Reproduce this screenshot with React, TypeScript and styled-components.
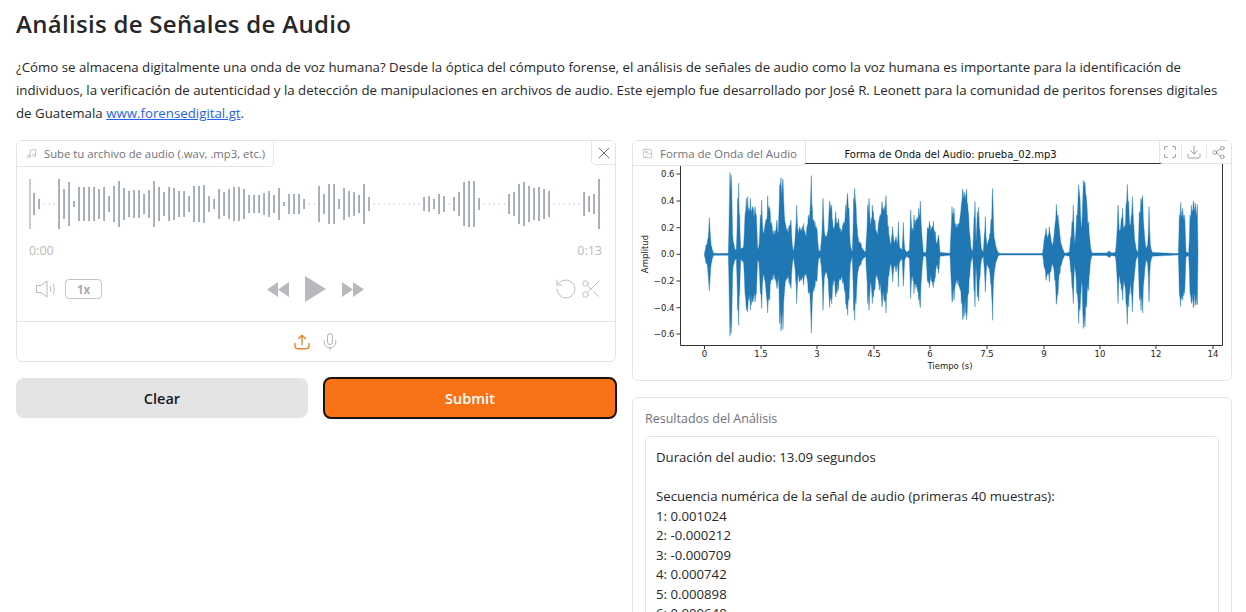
import React from 'react';
import styled, { createGlobalStyle } from 'styled-components';
import { Download, Image as ImageIcon, Mic, Music, RotateCcw, Scissors, Share2, X } from 'lucide-react';

const GlobalStyle = createGlobalStyle`
  html, body {
    margin: 0;
    height: 612px;
    overflow: hidden;
    background: #fff;
  }
  * { box-sizing: border-box; }
`;

const Page = styled.div`
  padding: 0 14px 0 16px;
  font-family: "Open Sans", "Liberation Sans", sans-serif;
  color: #27272a;
`;

const Title = styled.h1`
  margin: 0;
  padding-top: 8px;
  height: 56px;
  font-size: 24px;
  line-height: 32px;
  font-weight: 600;
  letter-spacing: 0.3px;
  color: #27272a;
`;

const Intro = styled.p`
  margin: 0 0 16px;
  height: 68px;
  font-size: 13.28px;
  line-height: 23px;
  color: #27272a;

  a { color: #2563eb; text-decoration: underline; }
`;

const Columns = styled.div`
  display: grid;
  grid-template-columns: 600px 600px;
  gap: 16px;
  align-items: start;
`;

const Column = styled.div`
  display: flex;
  flex-direction: column;
  gap: 16px;
`;

const Panel = styled.section<{ $height?: number }>`
  position: relative;
  border: 1px solid #e4e4e7;
  border-radius: 6px;
  background: #fff;
  height: ${({ $height }) => ($height ? `${$height}px` : 'auto')};
  overflow: hidden;
`;

const BlockLabel = styled.div<{ $height: number; $size: number }>`
  position: absolute;
  top: 0;
  left: 0;
  height: ${({ $height }) => $height}px;
  padding: 0 8px 0 9px;
  display: flex;
  align-items: center;
  gap: 7px;
  font-size: ${({ $size }) => $size}px;
  color: #71717a;
  background: #fff;
  border-right: 1px solid #e4e4e7;
  border-bottom: 1px solid #e4e4e7;
  border-bottom-right-radius: 5px;
  white-space: nowrap;

  svg { color: #a1a1aa; flex: none; }
`;

const CloseButton = styled.button`
  position: absolute;
  top: 0;
  right: 0;
  width: 24px;
  height: 24px;
  padding: 0;
  display: flex;
  align-items: center;
  justify-content: center;
  background: #fff;
  border: 0;
  border-left: 1px solid #e4e4e7;
  border-bottom: 1px solid #e4e4e7;
  border-bottom-left-radius: 5px;
  color: #52525b;
`;

const PlayerBody = styled.div`
  padding: 37px 13px 0 12px;
`;

const Wave = styled.svg`
  display: block;
`;

const Times = styled.div`
  display: flex;
  justify-content: space-between;
  margin-top: 12px;
  height: 18px;
  line-height: 18px;
  font-size: 12.5px;
  color: #b9b9bd;
`;

const Controls = styled.div`
  display: grid;
  grid-template-columns: 1fr auto 1fr;
  align-items: center;
  height: 30px;
  margin-top: 14px;
  color: #b9b9bd;
`;

const ControlsLeft = styled.div`
  display: flex;
  align-items: center;
  gap: 8px;
  padding-left: 6px;
`;

const ControlsCenter = styled.div`
  display: flex;
  align-items: center;
  gap: 16px;
`;

const ControlsRight = styled.div`
  display: flex;
  align-items: center;
  justify-content: flex-end;
  gap: 2px;
`;

const RateBadge = styled.div`
  width: 37px;
  height: 20px;
  border: 1px solid #c4c4c8;
  border-radius: 4px;
  display: flex;
  align-items: center;
  justify-content: center;
  font-size: 11.5px;
  font-weight: 700;
  color: #a9a9ae;
`;

const SourceBar = styled.div`
  margin-top: 17px;
  height: 40px;
  border-top: 1px solid #e4e4e7;
  display: flex;
  align-items: center;
  justify-content: center;
  gap: 10px;
  padding-left: 1px;
  color: #a1a1aa;
`;

const Actions = styled.div`
  display: grid;
  grid-template-columns: 292px 294px;
  gap: 15px;
`;

const ActionButton = styled.button<{ $primary?: boolean }>`
  height: ${({ $primary }) => ($primary ? '42px' : '40px')};
  margin-top: ${({ $primary }) => ($primary ? '-1px' : '0')};
  border-radius: 8px;
  font-family: inherit;
  font-size: 14.5px;
  font-weight: 600;
  color: ${({ $primary }) => ($primary ? '#fff' : '#18181b')};
  background: ${({ $primary }) => ($primary ? '#f97316' : '#e4e4e7')};
  border: ${({ $primary }) => ($primary ? '2px solid #1c1008' : '0')};
`;

const PlotSvg = styled.svg`
  display: block;
`;

const PlotTools = styled.div`
  position: absolute;
  top: 0;
  right: 0;
  height: 23px;
  width: 72px;
  display: flex;
  align-items: center;
  justify-content: space-between;
  padding: 0 5px 0 3px;
  background: #fff;
  border-left: 1px solid #e4e4e7;
  border-bottom: 1px solid #e4e4e7;
  border-bottom-left-radius: 4px;
  color: #71717a;
`;

const ToolDivider = styled.span`
  width: 1px;
  height: 14px;
  background: #e4e4e7;
`;

const ResultsLabel = styled.div`
  padding: 11px 12px 0;
  height: 38px;
  font-size: 12.5px;
  line-height: 19px;
  color: #71717a;
`;

const ResultsBox = styled.pre`
  margin: 0 12px 12px;
  padding: 11px 10px 10px;
  border: 1px solid #e4e4e7;
  border-radius: 4px;
  font-family: inherit;
  font-size: 13.2px;
  line-height: 19.5px;
  color: #27272a;
`;

// amplitudes of the recorder bars, 5px apart; 0 draws just a dot
const BARS = [
  11, 5, 0, 0, 0, 25, 15, 22, 3, 17, 17, 17, 17, 15, 17, 8, 18, 23, 16, 13, 14, 14, 10, 14, 23, 17, 12, 17, 16, 13, 13,
  8, 18, 18, 19, 8, 5, 15, 12, 15, 17, 17, 15, 9, 9, 9, 11, 13, 9, 16, 2, 10, 10, 10, 5, 0, 0, 18, 10, 20, 20, 5, 16,
  13, 12, 9, 20, 7, 0, 0, 0, 0, 0, 0, 0, 0, 0, 0, 7, 8, 5, 10, 8, 0, 7, 12, 22, 23, 23, 6, 0, 0, 0, 0, 0, 10, 12, 20,
  22, 18, 16, 17, 15, 13, 0, 0, 0, 0, 0, 0, 12, 8, 10, 25,
];

// envelope of the plot, traced as [x, top y] at 3x from x0
const ENVELOPE: { x0: number; pts: number[][] }[] = [
  {
    x0: 695,
    pts: [
      [28, 268], [33, 240], [38, 225], [43, 158], [47, 225], [52, 255], [56, 265], [100, 265], [103, 120], [105, 22],
      [108, 30], [110, 60], [113, 210], [118, 245], [124, 255], [128, 100], [131, 55], [134, 150], [137, 250], [146, 240],
      [150, 150], [154, 100], [158, 95], [162, 130], [166, 100], [172, 125], [180, 125], [184, 150], [188, 250], [192, 240],
      [196, 150], [200, 105], [204, 200], [212, 170], [218, 92], [224, 130], [232, 190], [240, 195], [246, 165], [250, 200],
      [254, 60], [258, 38], [264, 42], [268, 150], [275, 195], [282, 180], [288, 165], [292, 240], [296, 260], [302, 190],
      [305, 120], [308, 190], [314, 185], [320, 190], [326, 175], [332, 210], [340, 150], [346, 120], [349, 32], [352, 130],
      [360, 170], [366, 190], [370, 250], [376, 260], [381, 200], [384, 100], [388, 200], [396, 210], [404, 108], [410, 120],
      [416, 190], [422, 140], [430, 160], [436, 190], [444, 180], [452, 120], [458, 85], [462, 130], [466, 240], [472, 260],
      [476, 100], [479, 70], [483, 120], [490, 220], [498, 235], [505, 255], [512, 262], [518, 120], [522, 100], [526, 180],
      [532, 120], [540, 165],
    ],
  },
  {
    x0: 870,
    pts: [
      [20, 200], [28, 160], [36, 110], [42, 130], [48, 92], [52, 150], [58, 215], [62, 240], [68, 185], [72, 230], [78, 215],
      [82, 240], [85, 170], [88, 240], [96, 255], [100, 172], [104, 250], [110, 262], [118, 255], [122, 135], [126, 200],
      [132, 150], [138, 165], [146, 130], [151, 108], [155, 200], [160, 262], [168, 262], [172, 190], [178, 168], [184, 190],
      [190, 168], [196, 200], [200, 235], [206, 210], [210, 262], [240, 265], [246, 125], [252, 130], [256, 175], [266, 175],
      [274, 120], [278, 72], [284, 82], [290, 72], [296, 150], [302, 240], [308, 262], [312, 160], [315, 110], [318, 230],
      [322, 140], [326, 127], [330, 200], [334, 250], [340, 262], [346, 155], [350, 235], [356, 225], [362, 180], [368, 70],
      [371, 190], [376, 235], [384, 262], [390, 266], [516, 266],
    ],
  },
  {
    x0: 1040,
    pts: [
      [8, 264], [12, 230], [18, 190], [24, 210], [28, 185], [32, 215], [38, 240], [44, 190], [49, 118], [54, 150], [60, 210],
      [66, 245], [74, 265], [88, 262], [92, 220], [96, 170], [100, 120], [104, 240], [110, 150], [116, 60], [120, 100],
      [125, 190], [130, 45], [135, 50], [140, 110], [146, 170], [152, 250], [156, 264], [200, 264], [208, 258], [215, 264],
      [226, 262], [230, 220], [234, 120], [238, 200], [244, 160], [248, 130], [252, 190], [258, 120], [262, 58], [266, 110],
      [272, 180], [277, 95], [282, 190], [288, 250], [294, 264], [298, 140], [303, 100], [308, 92], [312, 190], [318, 250],
      [323, 240], [327, 125], [331, 240], [337, 262], [415, 266], [418, 150], [422, 112], [428, 130], [434, 150], [438, 260],
      [446, 264], [450, 150], [454, 120], [460, 108], [466, 115], [472, 118], [474, 268],
    ],
  },
];

const ZERO_Y = 254.3;

// fixed pseudo-noise so the trace looks sampled, but never changes between runs
const noise = (i: number) => {
  const v = Math.sin(i * 12.9898) * 43758.5453;
  return v - Math.floor(v);
};

const plotColumns = () => {
  const flat = ENVELOPE.flatMap(({ x0, pts }) => pts.map(([x, y]) => [x0 + x / 3, (268 - y) / 3]));
  const cols: number[][] = [];
  flat.forEach(([x, a], k) => {
    cols.push([x, a, a]);
    const next = flat[k + 1];
    if (!next) return;
    const steps = Math.floor((next[0] - x) / 0.5);
    for (let s = 1; s < steps; s++) {
      const t = s / steps;
      const amp = a + (next[1] - a) * t;
      const i = cols.length;
      const dent = amp > 4 ? 0.72 : 0.9;
      cols.push([
        x + (next[0] - x) * t,
        Math.max(0.7, amp * (dent + (1 - dent) * noise(i))),
        Math.max(0.7, amp * (dent + (1 - dent) * noise(i + 500))),
      ]);
    }
  });
  return cols;
};

const plotPoints = () => {
  const cols = plotColumns();
  const top = cols.map(([x, a]) => `${x.toFixed(2)},${(ZERO_Y - a).toFixed(1)}`);
  const bottom = [...cols].reverse().map(([x, , b]) => `${x.toFixed(2)},${(ZERO_Y + b).toFixed(1)}`);
  return [...top, ...bottom].join(' ');
};

const X_TICKS = [
  [704.5, '0'], [761, '1.5'], [817, '3'], [874, '4.5'], [930, '6'], [987, '7.5'], [1044, '9'], [1100, '10'], [1156, '12'], [1213, '14'],
] as [number, string][];

const Y_TICKS = [
  [174, '0.6'], [201, '0.4'], [227.7, '0.2'], [254.3, '0.0'], [281, '\u22120.2'], [307.7, '\u22120.4'], [334, '\u22120.6'],
] as [number, string][];

const Recorder = () => (
  <Wave width="574" height="52" viewBox="0 0 574 52">
    <rect x="0" y="1" width="2" height="50" fill="#c9cad6" />
    {BARS.map((h, i) =>
      h === 0 ? (
        <rect key={i} x={4.7 + i * 5} y="25.5" width="1" height="1" fill="#9ca3af" />
      ) : (
        <rect key={i} x={4.2 + i * 5} y={26 - h} width="1.7" height={h * 2} fill="#9ca3af" />
      ),
    )}
  </Wave>
);

const VolumeIcon = () => (
  <svg width="22" height="20" viewBox="0 0 22 20" fill="none" stroke="currentColor" strokeWidth="1">
    <path d="M1.5 6.5h4.5l6-4.5v16l-6-4.5H1.5z" />
    <path d="M15 7c1 2 1 4 0 6M18 5c1.6 3 1.6 7 0 10" />
  </svg>
);

const RewindIcon = () => (
  <svg width="22" height="15" viewBox="0 0 22 15" fill="currentColor">
    <path d="M0 7.5 11 0v15zM11 7.5 22 0v15z" />
  </svg>
);

const ForwardIcon = () => (
  <svg width="22" height="15" viewBox="0 0 22 15" fill="currentColor">
    <path d="M0 0l11 7.5L0 15zM11 0l11 7.5L11 15z" />
  </svg>
);

const PlayIcon = () => (
  <svg width="21" height="26" viewBox="0 0 21 26" fill="currentColor">
    <path d="M0 0l21 13L0 26z" />
  </svg>
);

const UploadIcon = () => (
  <svg width="16" height="16" viewBox="0 0 16 16" fill="none" stroke="#e8842c" strokeWidth="1.4" strokeLinecap="round" strokeLinejoin="round">
    <path d="M8 10.5V1.2M4.6 4.4 8 1.2l3.4 3.2" />
    <path d="M1 9.5v2.6c0 1.6 1 2.6 2.6 2.6h8.8c1.6 0 2.6-1 2.6-2.6V9.5" />
  </svg>
);

const FullscreenIcon = () => (
  <svg width="14" height="14" viewBox="0 0 14 14" fill="none" stroke="#8a8a92" strokeWidth="1">
    <path d="M1.5 4.5V2.8c0-.8.5-1.3 1.3-1.3h1.7M9.5 1.5h1.7c.8 0 1.3.5 1.3 1.3v1.7M12.5 9.5v1.7c0 .8-.5 1.3-1.3 1.3H9.5M4.5 12.5H2.8c-.8 0-1.3-.5-1.3-1.3V9.5" />
  </svg>
);

const Plot = () => (
  <PlotSvg width="598" height="239" viewBox="633 141 598 239">
    <g stroke="#333" strokeWidth="1" fill="none">
      <path d="M680.5 163.5V345.5H1222.5V163.5" />
      <path d="M680 163.5H1222" />
      {X_TICKS.map(([x]) => (
        <path key={x} d={`M${x} 345.5v3.5`} />
      ))}
      {Y_TICKS.map(([y]) => (
        <path key={y} d={`M676.5 ${y}h4`} />
      ))}
    </g>
    <polygon points={plotPoints()} fill="#1f77b4" stroke="#1f77b4" strokeWidth="0.4" />
    <g fontFamily="'DejaVu Sans', sans-serif" fontSize="8.5" fill="#222">
      {X_TICKS.map(([x, label]) => (
        <text key={x} x={x} y="357" textAnchor="middle">{label}</text>
      ))}
      {Y_TICKS.map(([y, label]) => (
        <text key={y} x="674.5" y={y + 3} textAnchor="end">{label}</text>
      ))}
      <text x="950" y="369" textAnchor="middle">Tiempo (s)</text>
      <text transform="translate(648 254) rotate(-90)" textAnchor="middle">Amplitud</text>
      <text x="950.5" y="158" fontSize="10" fill="#111" textAnchor="middle">Forma de Onda del Audio: prueba_02.mp3</text>
    </g>
  </PlotSvg>
);

const SAMPLES = ['0.001024', '-0.000212', '-0.000709', '0.000742', '0.000898', '0.000648'];

export default function App() {
  const results = [
    'Duración del audio: 13.09 segundos',
    '',
    'Secuencia numérica de la señal de audio (primeras 40 muestras):',
    ...SAMPLES.map((s, i) => `${i + 1}: ${s}`),
  ].join('\n');

  return (
    <Page>
      <GlobalStyle />
      <Title>Análisis de Señales de Audio</Title>
      <Intro>
        ¿Cómo se almacena digitalmente una onda de voz humana? Desde la óptica del cómputo forense, el análisis de señales de audio como la voz humana es importante para la identificación de individuos, la verificación de autenticidad y la detección de manipulaciones en archivos de audio. Este ejemplo fue desarrollado por José R. Leonett para la comunidad de peritos forenses digitales de Guatemala{' '}
        <a href="#">www.forensedigital.gt</a>.
      </Intro>
      <Columns>
        <Column>
          <Panel $height={222}>
            <BlockLabel $height={26} $size={11.3}>
              <Music size={11} strokeWidth={1.3} />
              Sube tu archivo de audio (.wav, .mp3, etc.)
            </BlockLabel>
            <CloseButton aria-label="Cerrar">
              <X size={20} strokeWidth={1} />
            </CloseButton>
            <PlayerBody>
              <Recorder />
              <Times>
                <span>0:00</span>
                <span>0:13</span>
              </Times>
              <Controls>
                <ControlsLeft>
                  <VolumeIcon />
                  <RateBadge>1x</RateBadge>
                </ControlsLeft>
                <ControlsCenter>
                  <RewindIcon />
                  <PlayIcon />
                  <ForwardIcon />
                </ControlsCenter>
                <ControlsRight>
                  <RotateCcw size={24} strokeWidth={0.9} />
                  <Scissors size={22} strokeWidth={1} />
                </ControlsRight>
              </Controls>
            </PlayerBody>
            <SourceBar>
              <UploadIcon />
              <Mic size={20} strokeWidth={1} />
            </SourceBar>
          </Panel>
          <Actions>
            <ActionButton>Clear</ActionButton>
            <ActionButton $primary>Submit</ActionButton>
          </Actions>
        </Column>
        <Column>
          <Panel $height={241}>
            <Plot />
            <BlockLabel $height={25} $size={11.5}>
              <ImageIcon size={11} strokeWidth={1.3} />
              Forma de Onda del Audio
            </BlockLabel>
            <PlotTools>
              <FullscreenIcon />
              <ToolDivider />
              <Download size={16} strokeWidth={1} />
              <ToolDivider />
              <Share2 size={15} strokeWidth={1} />
            </PlotTools>
          </Panel>
          <Panel>
            <ResultsLabel>Resultados del Análisis</ResultsLabel>
            <ResultsBox>{results}</ResultsBox>
          </Panel>
        </Column>
      </Columns>
    </Page>
  );
}
